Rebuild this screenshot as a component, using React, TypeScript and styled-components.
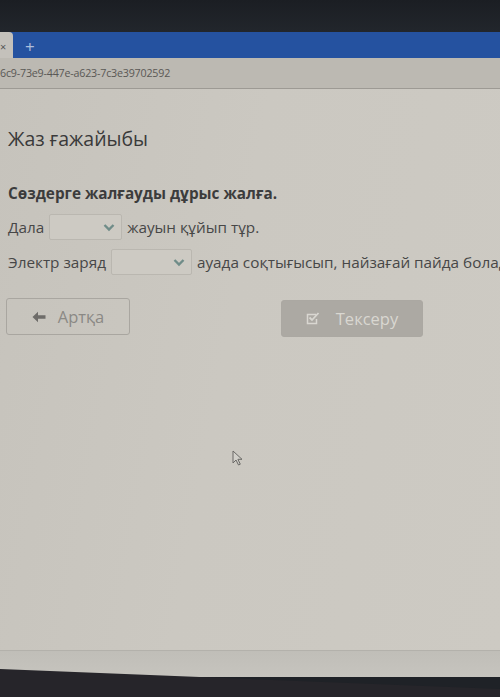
import React from 'react';
import styled, { createGlobalStyle } from 'styled-components';

const GlobalStyle = createGlobalStyle`
  html, body {
    margin: 0;
    padding: 0;
    background: #1f2227;
  }
  body {
    font-family: 'Open Sans', 'Noto Sans', sans-serif;
    overflow: hidden;
  }
`;

const Screen = styled.div`
  width: 500px;
  height: 697px;
  display: flex;
  flex-direction: column;
  overflow: hidden;
  background: #1f2227;
`;

const TopBezel = styled.div`
  height: 32px;
  background: linear-gradient(#1b1e23, #22262c);
`;

const TabBar = styled.div`
  height: 26px;
  display: flex;
  align-items: stretch;
  background: #2552a0;
`;

const Tab = styled.div`
  width: 13px;
  background: #c4c1bb;
  border-top-right-radius: 4px;
  display: flex;
  align-items: center;
  color: #555;
  font-size: 11px;
  padding-top: 2px;
`;

const NewTab = styled.div`
  margin-left: 12px;
  display: flex;
  align-items: center;
  color: #aebfdc;
  font-size: 17px;
  padding-top: 2px;
`;

const AddressBar = styled.div`
  height: 30px;
  display: flex;
  align-items: center;
  background: #bcb9b2;
  border-bottom: 1px solid #9d9a94;
  color: #5a5855;
  font-size: 10.7px;
  letter-spacing: -0.2px;
  white-space: nowrap;
`;

const Page = styled.main`
  flex: 1;
  position: relative;
  background: linear-gradient(100deg, #c6c3bc 0%, #cbc8c1 45%, #cdcac3 100%);
  padding: 36px 0 0 8px;
  color: #3b3b3b;
  overflow: hidden;
`;

const Title = styled.h1`
  margin: 0;
  font-weight: 400;
  font-size: 19.5px;
  line-height: 28px;
  color: #3a3a3a;
`;

const Question = styled.h2`
  margin: 30px 0 0;
  font-weight: 700;
  font-size: 15.3px;
  line-height: 20px;
  color: #3c3c3c;
`;

const Line = styled.div<{ $top: number }>`
  display: flex;
  align-items: center;
  white-space: nowrap;
  font-size: 15.3px;
  color: #474747;
  height: 28px;
  margin-top: ${({ $top }) => $top}px;
`;

const Select = styled.div<{ $w: number }>`
  flex-shrink: 0;
  width: ${({ $w }) => $w}px;
  height: 26px;
  box-sizing: border-box;
  margin: 0 5px 0 5px;
  border: 1px solid #bab7b0;
  border-radius: 2px;
  background: #cdcac3;
  display: flex;
  align-items: center;
  justify-content: flex-end;
  padding-right: 6px;
`;

const Buttons = styled.div`
  display: flex;
  gap: 151px;
  margin: 22px 0 0 -2px;
`;

const Button = styled.div<{ $primary?: boolean }>`
  flex-shrink: 0;
  height: 37px;
  box-sizing: border-box;
  display: flex;
  align-items: center;
  justify-content: center;
  gap: ${({ $primary }) => ($primary ? 16 : 12)}px;
  border-radius: 3px;
  font-size: 16.5px;
  width: ${({ $primary }) => ($primary ? 142 : 124)}px;
  margin-top: ${({ $primary }) => ($primary ? 2 : 0)}px;
  border: 1px solid ${({ $primary }) => ($primary ? '#aba8a2' : '#a9a6a0')};
  background: ${({ $primary }) => ($primary ? '#aca9a3' : 'transparent')};
  color: ${({ $primary }) => ($primary ? '#d9d7d1' : '#8b8985')};
`;

const Cursor = styled.svg`
  position: absolute;
  left: 232px;
  top: 361px;
`;

const ScreenEdge = styled.div`
  height: 26px;
  background: linear-gradient(#c0beb8, #c6c4be);
  border-top: 1px solid #b3b1ab;
  margin-top: -20px;
  position: relative;
`;

const BottomBezel = styled.div`
  height: 28px;
  margin-top: -8px;
  background: #26252a;
  clip-path: polygon(0 0, 100% 20px, 100% 100%, 0 100%);
  position: relative;
`;

const Chevron = () => (
  <svg width="12" height="9" viewBox="0 0 12 9">
    <path d="M1.5 2 L6 6.5 L10.5 2" fill="none" stroke="#6f8c88" strokeWidth="2.4" />
  </svg>
);

const ArrowLeft = () => (
  <svg width="14" height="12" viewBox="0 0 14 12">
    <path d="M0.5 6 L6 0.8 L6 4.3 L13.5 4.3 L13.5 7.7 L6 7.7 L6 11.2 Z" fill="#6e6c69" />
  </svg>
);

const CheckIcon = () => (
  <svg width="14" height="13" viewBox="0 0 14 13">
    <path d="M10 2.5 H1.5 V11.5 H10.5 V7" fill="none" stroke="#d9d7d1" strokeWidth="1.5" />
    <path d="M3.5 5.5 L6 8 L12.5 1" fill="none" stroke="#d9d7d1" strokeWidth="1.8" />
  </svg>
);

export default function App() {
  return (
    <Screen>
      <GlobalStyle />
      <TopBezel />
      <TabBar>
        <Tab>×</Tab>
        <NewTab>+</NewTab>
      </TabBar>
      <AddressBar>6c9-73e9-447e-a623-7c3e39702592</AddressBar>
      <Page>
        <Title>Жаз ғажайыбы</Title>
        <Question>Сөздерге жалғауды дұрыс жалға.</Question>
        <Line $top={10}>
          Дала
          <Select $w={73}>
            <Chevron />
          </Select>
          жауын құйып тұр.
        </Line>
        <Line $top={7}>
          Электр заряд
          <Select $w={81}>
            <Chevron />
          </Select>
          ауада соқтығысып, найзағай пайда болады.
        </Line>
        <Buttons>
          <Button>
            <ArrowLeft />
            Артқа
          </Button>
          <Button $primary>
            <CheckIcon />
            Тексеру
          </Button>
        </Buttons>
        <Cursor width="12" height="16" viewBox="0 0 12 16">
          <path d="M1 1 L1 13 L4 10 L6.5 15 L8.3 14.2 L5.9 9.3 L10 9.3 Z" fill="#d2d0ca" stroke="#6a6966" strokeWidth="1" />
        </Cursor>
      </Page>
      <ScreenEdge />
      <BottomBezel />
    </Screen>
  );
}
